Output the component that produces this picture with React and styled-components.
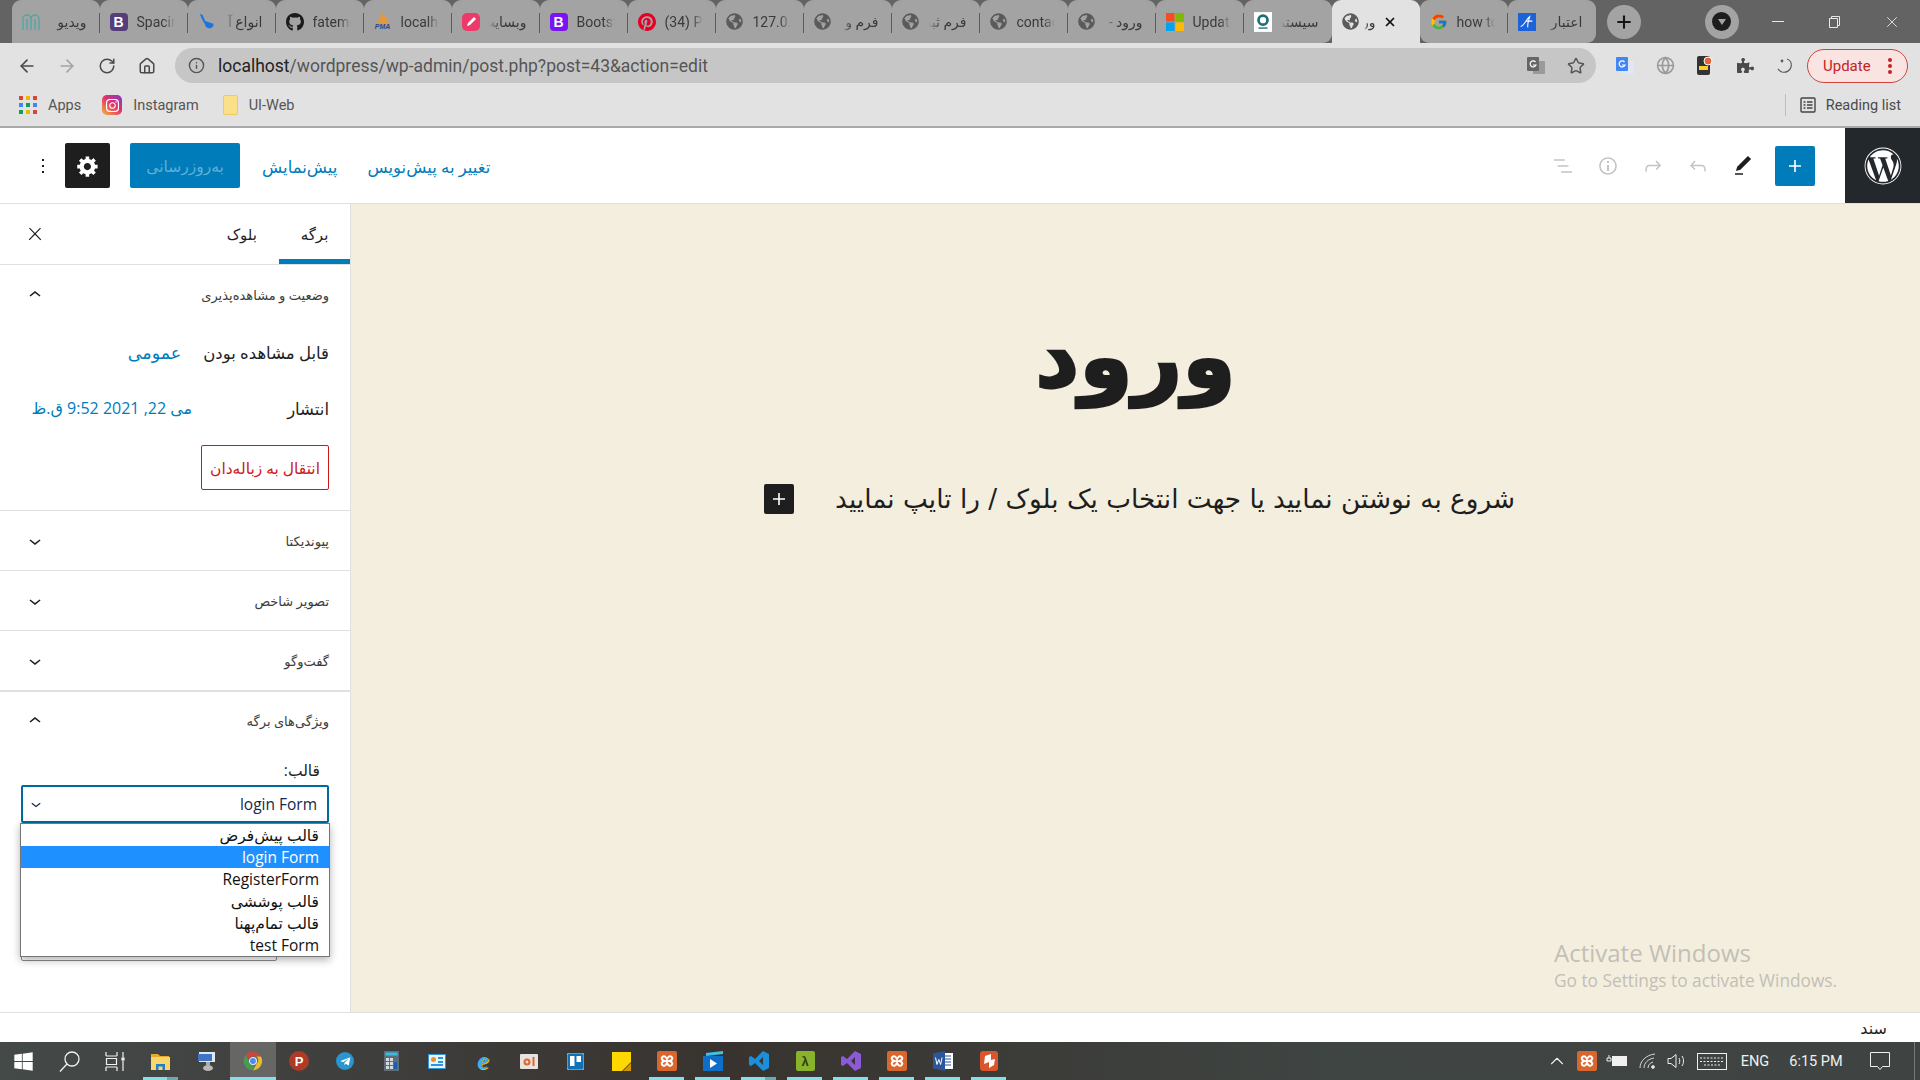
import React from "react";
import styled, { createGlobalStyle, css } from "styled-components";
import {
  FaWordpress,
  FaGithub,
  FaPinterest,
  FaGlobeAmericas,
  FaPuzzlePiece,
  FaWindows,
  FaTelegramPlane,
  FaInstagram,
} from "react-icons/fa";
import { FcGoogle } from "react-icons/fc";
import { ArrowLeft, ArrowRight, RotateCw, Home, Info, Star, Plus, X, Globe, ChevronUp } from "lucide-react";

const CHROME_FONT = `Roboto, "DejaVu Sans", sans-serif`;
const EDITOR_FONT = `"Open Sans", "DejaVu Sans", sans-serif`;

const GlobalStyle = createGlobalStyle`
  html, body {
    margin: 0;
    padding: 0;
    height: 100%;
    overflow: hidden;
    background: #fff;
  }
  * { box-sizing: border-box; }
`;

const Page = styled.div`
  display: flex;
  flex-direction: column;
  height: 1080px;
  width: 1920px;
  font-family: ${CHROME_FONT};
`;

/* ---------- browser tabs ---------- */

const TabStrip = styled.div`
  display: flex;
  align-items: stretch;
  height: 43px;
  padding-left: 11.5px;
  background: #636363;
  flex-shrink: 0;
`;

const Tab = styled.div`
  position: relative;
  display: flex;
  align-items: center;
  flex: 0 0 88px;
  padding-left: 10px;
  background: ${(p) => (p.$active ? "#e2e2e2" : "#a3a3a3")};
  border-radius: 9px 9px 0 0;
  ${(p) =>
    p.$afterActive &&
    css`
      border-bottom-right-radius: 9px;
    `}
  ${(p) =>
    p.$beforeActive &&
    css`
      border-bottom-left-radius: 9px;
    `}
  ${(p) =>
    p.$last &&
    css`
      border-bottom-right-radius: 9px;
    `}
  ${(p) =>
    p.$separator &&
    css`
      &::after {
        content: "";
        position: absolute;
        right: 0;
        top: 13px;
        bottom: 10px;
        width: 1px;
        background: #5c5c5c;
      }
    `}
`;

const FaviconBox = styled.span`
  display: flex;
  align-items: center;
  justify-content: center;
  width: 18px;
  height: 18px;
  flex-shrink: 0;
`;

const TabTitle = styled.span`
  display: block;
  width: ${(p) => (p.$active ? "12px" : "38px")};
  margin-left: ${(p) => (p.$active ? "4px" : "9px")};
  overflow: hidden;
  white-space: nowrap;
  font-size: 14px;
  line-height: 20px;
  color: #3a3a3a;
  direction: ${(p) => (p.$rtl ? "rtl" : "ltr")};
  mask-image: linear-gradient(${(p) => (p.$rtl ? "to left" : "to right")}, #000 70%, transparent);
`;

const TabClose = styled.span`
  display: flex;
  margin-left: 7px;
  color: #111;
`;

const BootstrapMark = styled.span`
  display: flex;
  align-items: center;
  justify-content: center;
  width: 18px;
  height: 18px;
  border-radius: 4px;
  background: ${(p) => p.$color};
  color: #fff;
  font: 700 14px "Liberation Sans", sans-serif;
`;

const PmaMark = styled.span`
  display: flex;
  flex-direction: column;
  align-items: center;
  font: italic 700 7px "Liberation Sans", sans-serif;
  line-height: 8px;
  color: #2a4a8e;
  &::before {
    content: "";
    border: 6px solid transparent;
    border-top: 0;
    border-bottom: 11px solid #e39a3e;
  }
`;

const StripActions = styled.div`
  display: flex;
  align-items: center;
  flex: 1;
`;

const RoundButton = styled.span`
  display: flex;
  align-items: center;
  justify-content: center;
  width: 34px;
  height: 34px;
  margin-left: 11px;
  border-radius: 50%;
  background: #a3a3a3;
  color: #151515;
`;

const ProfileButton = styled(RoundButton)`
  margin-left: 64px;
`;

const ProfileDot = styled.span`
  display: flex;
  align-items: center;
  justify-content: center;
  width: 19px;
  height: 19px;
  border-radius: 50%;
  background: #1d1d1d;
  &::after {
    content: "";
    border: 4px solid transparent;
    border-top: 6px solid #a3a3a3;
    border-bottom: 0;
  }
`;

const WindowControls = styled.div`
  display: flex;
  align-items: center;
  margin-left: auto;
  color: #e8e8e8;
`;

const WindowButton = styled.span`
  display: flex;
  align-items: center;
  justify-content: center;
  width: 57px;
  height: 43px;
`;

/* ---------- browser toolbar ---------- */

const ToolbarRow = styled.div`
  display: flex;
  align-items: center;
  height: 40px;
  padding-top: 5px;
  background: #e2e2e2;
  flex-shrink: 0;
`;

const NavButton = styled.span`
  display: flex;
  align-items: center;
  justify-content: center;
  width: 40px;
  color: ${(p) => (p.$muted ? "#a4a4a4" : "#4a4a4a")};
`;

const NavGroup = styled.div`
  display: flex;
  padding-left: 7px;
  width: 175px;
`;

const Omnibox = styled.div`
  display: flex;
  align-items: center;
  width: 1421px;
  height: 35px;
  border-radius: 18px;
  background: #c6c6c6;
  padding: 0 11px 0 13px;
`;

const UrlHost = styled.span`
  margin-left: 13px;
  font-size: 17.5px;
  color: #222;
`;

const UrlRest = styled.span`
  font-size: 17.5px;
  color: #555;
`;

const OmniIcons = styled.div`
  display: flex;
  align-items: center;
  gap: 21px;
  margin-left: auto;
  color: #555;
`;

const ExtensionSlot = styled.span`
  display: flex;
  align-items: center;
  justify-content: center;
  width: 40px;
  color: #5d5d5d;
`;

const Extensions = styled.div`
  display: flex;
  margin-left: 9px;
`;

const UpdatePill = styled.span`
  display: flex;
  align-items: center;
  width: 101px;
  height: 34px;
  margin-left: 2px;
  padding-left: 15px;
  border: 1.5px solid #d8413a;
  border-radius: 17px;
  background: #f9e4e1;
  color: #c5221f;
  font-size: 15px;
`;

const UpdateDots = styled.span`
  display: flex;
  flex-direction: column;
  gap: 2px;
  margin-left: 17px;
  i {
    width: 4px;
    height: 4px;
    border-radius: 50%;
    background: #c5221f;
  }
`;

const BookmarkRow = styled.div`
  display: flex;
  align-items: center;
  height: 45px;
  padding: 1px 19px 0;
  background: #e2e2e2;
  border-bottom: 2px solid #a9a9a9;
  flex-shrink: 0;
`;

const Bookmark = styled.span`
  display: flex;
  align-items: center;
  gap: 11px;
  margin-right: 21px;
  font-size: 14.5px;
  color: #555;
`;

const AppsGrid = styled.span`
  display: grid;
  grid-template-columns: repeat(3, 4px);
  gap: 3px;
`;

const AppDot = styled.i`
  width: 4px;
  height: 4px;
  background: ${(p) => p.$c};
`;

const InstaBadge = styled.span`
  display: flex;
  align-items: center;
  justify-content: center;
  width: 20px;
  height: 20px;
  border-radius: 5px;
  background: linear-gradient(40deg, #f7b23b, #e1306c 55%, #7a3ccf);
  color: #fff;
`;

const FolderMark = styled.span`
  width: 15px;
  height: 20px;
  margin-left: 3px;
  border-radius: 2px;
  background: #fbe08a;
  border: 1px solid #eccb63;
`;

const ReadingList = styled.span`
  display: flex;
  align-items: center;
  margin-left: auto;
  padding-left: 14px;
  gap: 10px;
  border-left: 1px solid #bdbdbd;
  height: 22px;
  font-size: 14.5px;
  color: #4a4a4a;
`;

/* ---------- wordpress editor ---------- */

const Editor = styled.div`
  display: flex;
  flex-direction: column;
  flex: 1;
  min-height: 0;
  direction: rtl;
  background: #fff;
  font-family: ${EDITOR_FONT};
`;

const EditorHeader = styled.header`
  display: flex;
  align-items: center;
  height: 76px;
  border-bottom: 1px solid #e0e0e0;
  flex-shrink: 0;
`;

const WpLogo = styled.div`
  display: flex;
  align-items: center;
  justify-content: center;
  width: 75px;
  height: 75px;
  background: #23282d;
  color: #fff;
`;

const InserterButton = styled.span`
  display: flex;
  align-items: center;
  justify-content: center;
  width: 40px;
  height: 40px;
  margin-right: 30px;
  margin-left: 10px;
  border-radius: 2px;
  background: #007cba;
  color: #fff;
`;

const ToolIcon = styled.span`
  display: flex;
  align-items: center;
  justify-content: center;
  width: 45px;
  color: ${(p) => (p.$active ? "#1e1e1e" : "#c4c4c4")};
`;

const HeaderActions = styled.div`
  display: flex;
  align-items: center;
  margin-right: auto;
  height: 100%;
`;

const LinkButton = styled.span`
  margin-left: ${(p) => p.$gap}px;
  padding-top: 1px;
  font-size: 16.5px;
  color: #007cba;
  white-space: nowrap;
`;

const PublishButton = styled.span`
  display: flex;
  align-items: center;
  justify-content: center;
  width: 110px;
  height: 45px;
  margin-left: 20px;
  border-radius: 2px;
  background: #007cba;
  color: #5fb0d8;
  font-size: 15.5px;
`;

const SettingsButton = styled.span`
  display: flex;
  align-items: center;
  justify-content: center;
  width: 45px;
  height: 45px;
  border-radius: 2px;
  background: #1e1e1e;
  color: #fff;
`;

const MoreButton = styled.span`
  display: flex;
  justify-content: center;
  width: 65px;
  padding-left: 21px;
  color: #1e1e1e;
`;

const Workspace = styled.div`
  display: flex;
  flex: 1;
  min-height: 0;
`;

const Canvas = styled.main`
  position: relative;
  flex: 1;
  background: #f4eede;
  color: #1e1e1e;
`;

const PageTitle = styled.h1`
  margin: 0;
  padding-top: 78px;
  font-family: "DejaVu Sans", sans-serif;
  font-size: 86px;
  line-height: 150px;
  font-weight: 700;
  text-align: center;
  -webkit-text-stroke: 2.5px #1e1e1e;
`;

const EmptyBlock = styled.div`
  display: flex;
  align-items: center;
  justify-content: space-between;
  width: 751px;
  margin: 52px 405px 0 0;
  font-family: "DejaVu Sans", sans-serif;
  font-size: 26.3px;
`;

const BlockInserter = styled.span`
  display: flex;
  align-items: center;
  justify-content: center;
  width: 30px;
  height: 30px;
  border-radius: 2px;
  background: #1e1e1e;
  color: #fff;
`;

const Watermark = styled.div`
  position: absolute;
  left: 1203px;
  bottom: 19px;
  direction: ltr;
  font-family: "Open Sans", sans-serif;
  color: #c2bfb6;
`;

const WatermarkTitle = styled.div`
  font-size: 24px;
  line-height: 33px;
`;

const WatermarkNote = styled.div`
  font-size: 17.3px;
  line-height: 24px;
`;

const Sidebar = styled.aside`
  width: 351px;
  border-right: 1px solid #e0e0e0;
  background: #fff;
  color: #1e1e1e;
  flex-shrink: 0;
`;

const SidebarTabs = styled.div`
  display: flex;
  align-items: stretch;
  height: 61px;
  border-bottom: 1px solid #e0e0e0;
`;

const SidebarTab = styled.span`
  display: flex;
  align-items: center;
  justify-content: center;
  font-size: 15px;
  ${(p) =>
    p.$active
      ? css`
          width: 71px;
          box-shadow: inset 0 -5px 0 #007cba;
        `
      : css`
          margin-right: 22px;
        `}
`;

const SidebarClose = styled.span`
  display: flex;
  align-items: center;
  justify-content: center;
  width: 70px;
  margin-right: auto;
`;

const Panel = styled.section`
  border-bottom: ${(p) => (p.$thick ? "2px" : "1px")} solid #e0e0e0;
  padding-bottom: ${(p) => p.$pad || 0}px;
`;

const PanelHeader = styled.div`
  display: flex;
  align-items: center;
  justify-content: space-between;
  height: ${(p) => p.$h || 59}px;
  padding-right: 21px;
  font-size: 13px;
  color: #3c3c3c;
`;

const PanelChevron = styled.span`
  display: flex;
  justify-content: center;
  width: 70px;
  color: #1e1e1e;
`;

const PostRow = styled.div`
  display: flex;
  align-items: center;
  height: 56px;
  padding: 0 21px;
  font-size: 16.5px;
`;

const PostValue = styled.a`
  margin-right: ${(p) => p.$gap}px;
  color: #007cba;
  font-size: ${(p) => p.$size}px;
`;

const TrashButton = styled.span`
  display: flex;
  align-items: center;
  justify-content: center;
  width: 128px;
  height: 45px;
  margin: 9px 21px 0 0;
  border: 1px solid #cc1818;
  border-radius: 2px;
  color: #cc1818;
  font-size: 15.5px;
`;

const TemplateField = styled.div`
  position: relative;
  padding: 11px 21px 0;
  height: 319px;
`;

const FieldLabel = styled.div`
  padding-right: 9px;
  font-size: 15.5px;
  line-height: 20px;
  margin-bottom: 5px;
`;

const SelectBox = styled.div`
  display: flex;
  align-items: center;
  justify-content: space-between;
  height: 38px;
  padding: 0 10px 0 3px;
  border: 2px solid #006ba1;
  border-radius: 2px;
  font-size: 15.5px;
  color: #16264c;
`;

const SelectMenu = styled.ul`
  position: absolute;
  top: 74px;
  left: 20px;
  right: 20px;
  margin: 0;
  padding: 0;
  list-style: none;
  background: #fff;
  border: 1px solid #767676;
  box-shadow: 0 3px 8px rgba(0, 0, 0, 0.3);
  font-size: 15.5px;
  color: #111;
  z-index: 2;
`;

const SelectOption = styled.li`
  height: 22px;
  line-height: 22px;
  padding: 0 10px;
  background: ${(p) => (p.$selected ? "#1e90ff" : "transparent")};
  color: ${(p) => (p.$selected ? "#fff" : "inherit")};
`;

const HiddenButton = styled.div`
  width: 256px;
  height: 40px;
  margin: 98px auto 0 0;
  border: 1px solid #8d8d8d;
  border-radius: 2px;
`;

const StatusBar = styled.footer`
  display: flex;
  align-items: center;
  height: 30px;
  padding-right: 33px;
  border-top: 1px solid #e0e0e0;
  font-size: 16px;
  color: #1e1e1e;
  flex-shrink: 0;
`;

/* ---------- windows taskbar ---------- */

const Taskbar = styled.div`
  display: flex;
  align-items: stretch;
  height: 38px;
  background: linear-gradient(90deg, #444a48, #3f3f3d 18%, #38332f 38%, #3b3a36 50%, #3f4543 70%, #3f4442);
  color: #fff;
  flex-shrink: 0;
`;

const TaskItem = styled.span`
  position: relative;
  display: flex;
  align-items: center;
  justify-content: center;
  width: 46px;
  background: ${(p) => (p.$active ? "#666664" : "transparent")};
  ${(p) =>
    p.$running &&
    css`
      &::after {
        content: "";
        position: absolute;
        bottom: 0;
        height: 3px;
        left: ${p.$active ? "0" : "5px"};
        right: ${p.$active ? "0" : "6px"};
        background: ${p.$split
          ? "linear-gradient(90deg, #86dfe6 70%, #6aa9ad 70%)"
          : "#86dfe6"};
      }
    `}
`;

const AppTile = styled.span`
  display: flex;
  align-items: center;
  justify-content: center;
  width: ${(p) => p.$w || 20}px;
  height: ${(p) => p.$h || 20}px;
  border-radius: ${(p) => p.$r || 2}px;
  background: ${(p) => p.$bg};
  color: ${(p) => p.$fg || "#fff"};
  font: 700 13px "Liberation Sans", sans-serif;
`;

const IeLetter = styled.span`
  font: italic 700 26px "Liberation Serif", serif;
  line-height: 22px;
  color: #35b4ee;
  text-shadow: 1px 1px 0 #e8b923;
`;

const Tray = styled.div`
  display: flex;
  align-items: center;
  margin-left: auto;
  font-size: 14.5px;
  color: #f0f0f0;
`;

const TrayItem = styled.span`
  display: flex;
  align-items: center;
  justify-content: center;
  width: ${(p) => p.$w}px;
`;

const ShowDesktop = styled.span`
  width: 13px;
  height: 100%;
  margin-right: 5px;
  border-right: 1px solid #777;
`;

const Svg24 = ({ size = 24, d, fill = "currentColor" }) => (
  <svg width={size} height={size} viewBox="0 0 24 24" fill={fill}>
    <path d={d} />
  </svg>
);

const paths = {
  plus: "M18 11.2h-5.2V6h-1.6v5.2H6v1.6h5.2V18h1.6v-5.2H18z",
  list: "M13.8 5.2H3v1.5h10.8V5.2zm-3.6 12v1.5H21v-1.5H10.2zm7.2-6H6.6v1.5h10.8v-1.5z",
  info: "M12 3.2c-4.8 0-8.8 3.9-8.8 8.8 0 4.8 3.9 8.8 8.8 8.8 4.8 0 8.8-3.9 8.8-8.8 0-4.8-4-8.8-8.8-8.8zm0 16c-4 0-7.2-3.3-7.2-7.2C4.8 8 8 4.8 12 4.8s7.2 3.3 7.2 7.2c0 4-3.2 7.2-7.2 7.2zM11 17h2v-6h-2v6zm0-8h2V7h-2v2z",
  redo: "M15.6 6.5l-1.1 1 2.9 3.3H8c-.9 0-1.7.3-2.3.9-1.4 1.5-1.4 4.2-1.4 5.6v.2h1.5v-.3c0-1.1 0-3.5 1-4.5.3-.3.7-.5 1.3-.5h9.2L14.5 15l1.1 1.1 4.6-4.6-4.6-5z",
  undo: "M18.3 11.7c-.6-.6-1.4-.9-2.3-.9H6.7l2.9-3.3-1.1-1-4.5 5L8.5 16l1-1-2.7-2.7H16c.5 0 .9.2 1.3.5 1 1 1 3.4 1 4.5v.3h1.5v-.2c0-1.5 0-4.3-1.5-5.7z",
  pencil: "M20.1 5.1L16.9 2 6.2 12.7l-1.3 4.4 4.5-1.3L20.1 5.1zM4 20.8h8v-1.5H4v1.5z",
  more: "M13 19h-2v-2h2v2zm0-6h-2v-2h2v2zm0-6h-2V5h2v2z",
  close: "M13 11.8l6.1-6.3-1-1-6.1 6.2-6.1-6.2-1 1 6.1 6.3-6.5 6.7 1 1 6.5-6.6 6.5 6.6 1-1z",
  up: "M6.5 12.4L12 8l5.5 4.4-.9 1.2L12 10l-4.5 3.6-1-1.2z",
  down: "M17.5 11.6L12 16l-5.5-4.4.9-1.2L12 14l4.6-3.6 1 1.2z",
};

const CogIcon = () => (
  <svg width="24" height="24" viewBox="0 0 20 20" fill="currentColor">
    <path d="M18 12h-2.18c-.17.7-.44 1.35-.81 1.93l1.54 1.54-2.1 2.1-1.54-1.54c-.58.36-1.23.63-1.91.79V19H8v-2.18c-.68-.16-1.33-.43-1.91-.79l-1.54 1.54-2.12-2.12 1.54-1.54c-.36-.58-.63-1.23-.79-1.91H1V9.03h2.17c.16-.7.44-1.35.8-1.94L2.43 5.55l2.1-2.1 1.54 1.54c.58-.37 1.24-.64 1.93-.81V2h3v2.18c.68.16 1.33.43 1.91.79l1.54-1.54 2.12 2.12-1.54 1.54c.36.59.64 1.24.8 1.94H18V12zm-8.5 1.5c1.66 0 3-1.34 3-3s-1.34-3-3-3-3 1.34-3 3 1.34 3 3 3z" />
  </svg>
);

const MsLogo = () => (
  <svg width="20" height="20" viewBox="0 0 20 20">
    <rect width="9.5" height="9.5" fill="#f25022" />
    <rect x="10.5" width="9.5" height="9.5" fill="#7fba00" />
    <rect y="10.5" width="9.5" height="9.5" fill="#00a4ef" />
    <rect x="10.5" y="10.5" width="9.5" height="9.5" fill="#ffb900" />
  </svg>
);

const ChromeLogo = () => (
  <svg width="20" height="20" viewBox="0 0 24 24">
    <path d="M12 1a11 11 0 0 1 9.5 5.500H12a5.500 5.500 0 0 0-5.200 3.700L3.400 5A11 11 0 0 1 12 1z" fill="#c9483b" />
    <path d="M21.500 6.500A11 11 0 0 1 12 23l4.700-8.200a5.500 5.500 0 0 0-.6-8.300z" fill="#e8bd2a" />
    <path d="M12 23A11 11 0 0 1 3.400 5l4.700 8.800a5.500 5.500 0 0 0 5.600 3.700z" fill="#4a9a57" />
    <circle cx="12" cy="12" r="4.200" fill="#4b8bf0" stroke="#e8e8e8" strokeWidth="1.300" />
  </svg>
);

const XamppIcon = () => (
  <AppTile $bg="#d9662c">
    <svg width="16" height="16" viewBox="0 0 24 24" fill="none" stroke="#fff" strokeWidth="3">
      <path d="M5 6c3-3 5.500 0 7 3 1.500-3 4-6 7-3 2.500 2.500 0 5-3.500 6 3.500 1 6 3.500 3.500 6-3 3-5.500 0-7-3-1.500 3-4 6-7 3-2.500-2.500 0-5 3.500-6C5 11 2.500 8.500 5 6z" />
    </svg>
  </AppTile>
);

const Favicon = ({ kind }) => {
  switch (kind) {
    case "teal":
      return (
        <svg width="18" height="20" viewBox="0 0 18 20" fill="none" stroke="#4aa7a8" strokeWidth="1.300">
          <path d="M1 18V7a4 4 0 0 1 8 0 4 4 0 0 1 8 0v11M5 18V7M13 18V7M9 7v11" />
        </svg>
      );
    case "boot1":
      return <BootstrapMark $color="#563d7c">B</BootstrapMark>;
    case "boot2":
      return <BootstrapMark $color="#7a14f2">B</BootstrapMark>;
    case "horn":
      return (
        <svg width="20" height="20" viewBox="0 0 20 20" fill="#1c74e0">
          <path d="M2 1l3 1 3 7 9 3c1 2-1 5-4 5-3 0-5-2-5-4L5 8z" />
        </svg>
      );
    case "github":
      return <FaGithub size={20} color="#1b1b1b" />;
    case "pma":
      return <PmaMark>PMA</PmaMark>;
    case "pink":
      return (
        <svg width="18" height="18" viewBox="0 0 18 18">
          <rect width="18" height="18" rx="5" fill="#ee3a6b" />
          <path d="M5 13l1-3 6-6 2 2-6 6z" fill="#fff" />
        </svg>
      );
    case "pin":
      return <FaPinterest size={20} color="#e60023" />;
    case "ms":
      return <MsLogo />;
    case "seal":
      return (
        <svg width="20" height="22" viewBox="0 0 20 22">
          <rect width="20" height="22" fill="#fff" />
          <circle cx="10" cy="9" r="5" fill="none" stroke="#1e6e78" strokeWidth="3" />
          <rect x="5" y="17" width="10" height="1.500" fill="#1e6e78" />
        </svg>
      );
    case "google":
      return <FcGoogle size={20} />;
    case "sig":
      return (
        <svg width="20" height="20" viewBox="0 0 20 20">
          <rect width="20" height="20" fill="#1c62d8" />
          <path d="M3 15c4-1 6-8 10-11-1 4-3 8-2 12M9 9h7" stroke="#fff" strokeWidth="1.200" fill="none" />
        </svg>
      );
    default:
      return <FaGlobeAmericas size={17} color="#5a5a5a" />;
  }
};

const tabs = [
  { icon: "teal", title: "ویدیو", rtl: true },
  { icon: "boot1", title: "Spacing" },
  { icon: "horn", title: "انواع آ", rtl: true },
  { icon: "github", title: "fatemeh" },
  { icon: "pma", title: "localhost" },
  { icon: "pink", title: "وبسایت", rtl: true },
  { icon: "boot2", title: "Bootstrap" },
  { icon: "pin", title: "(34) Pin" },
  { icon: "globe", title: "127.0.0.1" },
  { icon: "globe", title: "فرم و", rtl: true },
  { icon: "globe", title: "فرم ثبت", rtl: true },
  { icon: "globe", title: "contact" },
  { icon: "globe", title: "ورود -", rtl: true },
  { icon: "ms", title: "Update" },
  { icon: "seal", title: "سیستم", rtl: true },
  { icon: "globe", title: "ورود", rtl: true, active: true },
  { icon: "google", title: "how to" },
  { icon: "sig", title: "اعتبار", rtl: true },
];

const appColors = ["#db4437", "#f4b400", "#db4437", "#4285f4", "#0f9d58", "#4285f4", "#0f9d58", "#f4b400", "#db4437"];

const taskApps = [
  { node: <FaWindows size={21} /> },
  {
    node: (
      <svg width="21" height="21" viewBox="0 0 21 21" fill="none" stroke="#f2f2f2" strokeWidth="1.300">
        <circle cx="13" cy="8" r="7" />
        <path d="M8 13l-7 7.500" />
      </svg>
    ),
  },
  {
    node: (
      <svg width="20" height="20" viewBox="0 0 20 20" fill="none" stroke="#f2f2f2" strokeWidth="1.200">
        <path d="M1 5h11M1 1v4M12 1v4M1.500 7.500h10v6h-10zM1 16h11M1 16v4M12 16v4M18 1v5M18 10v10" />
        <rect x="17" y="7" width="2" height="2" fill="#f2f2f2" />
      </svg>
    ),
  },
  {
    node: (
      <svg width="20" height="18" viewBox="0 0 20 18">
        <path d="M0 2h7l2 2h9v3H0z" fill="#e9a92c" />
        <rect y="5" width="19" height="13" fill="#f9d56c" />
        <path d="M5 18v-6h9v6h-2.500v-3.500h-4V18z" fill="#1f80c9" />
      </svg>
    ),
    running: true,
    split: true,
  },
  {
    node: (
      <svg width="20" height="22" viewBox="0 0 20 22">
        <rect x="2" y="2" width="16" height="10" fill="#dfe7f2" />
        <rect x="1" y="4" width="14" height="7" fill="#3f73c4" />
        <path d="M9 12h4v3H9z" fill="#aaa" />
        <ellipse cx="11" cy="18" rx="5" ry="3" fill="#b9b9b9" />
      </svg>
    ),
  },
  { node: <ChromeLogo />, running: true, active: true },
  { node: <AppTile $r={10} $bg="#ad3b25">P</AppTile> },
  {
    node: (
      <AppTile $w={18} $h={18} $r={9} $bg="#2a95cf">
        <FaTelegramPlane size={11} />
      </AppTile>
    ),
  },
  {
    node: (
      <svg width="15" height="20" viewBox="0 0 15 20">
        <rect width="15" height="20" fill="#5f6c78" />
        <rect x="1.500" y="1.500" width="12" height="3" fill="#38bde0" />
        <path d="M2 7h3v3H2zM6 7h3v3H6zM2 11h3v3H2zM6 11h3v3H6zM2 15h3v3H2zM6 15h3v3H6z" fill="#d5dadf" />
        <rect x="10" y="11" width="3" height="7" fill="#1c5fa8" />
      </svg>
    ),
  },
  {
    node: (
      <svg width="18" height="15" viewBox="0 0 18 15">
        <rect width="18" height="15" fill="#2f95d8" />
        <rect x="1" y="1" width="16" height="13" fill="#e8f3fb" />
        <circle cx="5.500" cy="5.500" r="2.500" fill="#e8922c" />
        <path d="M10 3h5v2h-5zM10 7h5v2h-5zM3 10h12v2H3z" fill="#2f95d8" />
      </svg>
    ),
  },
  { node: <IeLetter>e</IeLetter> },
  {
    node: (
      <svg width="18" height="15" viewBox="0 0 18 15">
        <rect width="18" height="15" rx="1" fill="#e8e3df" />
        <circle cx="7" cy="8" r="3.500" fill="#e0662f" />
        <circle cx="7" cy="8" r="1.400" fill="#e8e3df" />
        <rect x="12.500" y="3" width="2" height="9" fill="#e0662f" />
      </svg>
    ),
  },
  {
    node: (
      <svg width="17" height="17" viewBox="0 0 17 17">
        <rect width="17" height="17" rx="2.500" fill="#0d72b8" stroke="#b9c3cc" />
        <rect x="3" y="3" width="4.500" height="10" fill="#fff" />
        <rect x="9.500" y="3" width="4.500" height="6" fill="#fff" />
      </svg>
    ),
  },
  {
    node: (
      <svg width="19" height="19" viewBox="0 0 19 19">
        <rect width="19" height="19" fill="#ffd800" />
        <path d="M19 10v9H10z" fill="#3a3530" />
        <path d="M19 11v8h-8z" fill="#e3a300" opacity=".9" />
      </svg>
    ),
  },
  { node: <XamppIcon />, running: true },
  {
    node: (
      <svg width="20" height="20" viewBox="0 0 20 20">
        <path d="M0 5h20v15H0z" fill="#0f6fc6" />
        <path d="M3 2l17-2v3L3 5z" fill="#3fc1ea" />
        <path d="M7 8l7 4.500L7 17z" fill="#fff" />
      </svg>
    ),
    running: true,
  },
  {
    node: (
      <svg width="20" height="20" viewBox="0 0 20 20">
        <path d="M14 0l6 3v14l-6 3-8-8-4 3-2-1V6l2-1 4 3zm0 6l-4 4 4 4z" fill="#1a8fdd" />
      </svg>
    ),
    running: true,
    split: true,
  },
  { node: <AppTile $w={19} $bg="#89b32c" $fg="#2c3d0e">λ</AppTile>, running: true },
  {
    node: (
      <svg width="20" height="20" viewBox="0 0 20 20">
        <path d="M14 0l6 3v14l-6 3-8-8-4 3-2-1V6l2-1 4 3zm0 6l-4 4 4 4z" fill="#8c5ad6" />
      </svg>
    ),
    running: true,
  },
  { node: <XamppIcon />, running: true },
  {
    node: (
      <svg width="20" height="20" viewBox="0 0 20 20">
        <rect x="9" y="2" width="11" height="16" fill="#fff" />
        <path d="M11 5h7M11 8h7M11 11h7M11 14h7" stroke="#2b579a" />
        <path d="M0 2.500L12 0v20L0 17.500z" fill="#2b579a" />
        <path d="M2.500 6.500l1.500 7 1.800-5 1.800 5 1.500-7" stroke="#fff" fill="none" />
      </svg>
    ),
    running: true,
  },
  {
    node: (
      <AppTile $w={18} $r={3} $bg="#d9552b">
        <svg width="12" height="16" viewBox="0 0 12 16">
          <path d="M2 3l6-2v6l4-1-1 6-5 3V9L1 11z" fill="#fff" />
        </svg>
      </AppTile>
    ),
    running: true,
  },
];

const TranslateIcon = ({ tint }) => (
  <svg width="20" height="20" viewBox="0 0 20 20">
    <rect x="7" y="5" width="12" height="13" rx="1" fill={tint ? "#dfe7f7" : "#9a9a9a"} />
    <rect x="1" y="1" width="12" height="14" rx="1" fill={tint ? "#4285f4" : "#666"} />
    <path d="M9.500 6a3 3 0 1 0 .5 3H7" stroke="#fff" strokeWidth="1.200" fill="none" />
  </svg>
);

const App = () => (
  <Page>
    <GlobalStyle />

    <TabStrip>
      {tabs.map((tab, i) => {
        const next = tabs[i + 1];
        const prev = tabs[i - 1];
        return (
          <Tab
            key={i}
            $active={tab.active}
            $beforeActive={prev && prev.active}
            $afterActive={next && next.active}
            $last={i === tabs.length - 1}
            $separator={!tab.active && !(next && next.active) && i !== tabs.length - 1}
          >
            <FaviconBox>
              <Favicon kind={tab.icon} />
            </FaviconBox>
            <TabTitle $rtl={tab.rtl} $active={tab.active}>
              {tab.title}
            </TabTitle>
            {tab.active && (
              <TabClose>
                <X size={14} strokeWidth={3} />
              </TabClose>
            )}
          </Tab>
        );
      })}
      <StripActions>
        <RoundButton>
          <Plus size={20} strokeWidth={2.500} />
        </RoundButton>
        <ProfileButton>
          <ProfileDot />
        </ProfileButton>
        <WindowControls>
          <WindowButton>
            <svg width="12" height="2"><rect width="12" height="1" fill="currentColor" /></svg>
          </WindowButton>
          <WindowButton>
            <svg width="13" height="14" fill="none" stroke="currentColor"><path d="M3.500 3V1.500h8v9H10M1.500 3.500h8v9h-8z" /></svg>
          </WindowButton>
          <WindowButton>
            <X size={18} strokeWidth={1.200} />
          </WindowButton>
        </WindowControls>
      </StripActions>
    </TabStrip>

    <ToolbarRow>
      <NavGroup>
        <NavButton><ArrowLeft size={20} /></NavButton>
        <NavButton $muted><ArrowRight size={20} /></NavButton>
        <NavButton><RotateCw size={18} /></NavButton>
        <NavButton><Home size={18} /></NavButton>
      </NavGroup>
      <Omnibox>
        <Info size={17} color="#555" />
        <UrlHost>localhost</UrlHost>
        <UrlRest>/wordpress/wp-admin/post.php?post=43&amp;action=edit</UrlRest>
        <OmniIcons>
          <TranslateIcon />
          <Star size={18} />
        </OmniIcons>
      </Omnibox>
      <Extensions>
        <ExtensionSlot><TranslateIcon tint /></ExtensionSlot>
        <ExtensionSlot><Globe size={19} color="#9a9a9a" /></ExtensionSlot>
        <ExtensionSlot>
          <svg width="16" height="20" viewBox="0 0 16 20">
            <rect width="13" height="19" rx="2" fill="#333" />
            <rect x="2" y="10" width="9" height="4" fill="#f7d02c" />
            <circle cx="11" cy="5" r="4" fill="#e2683a" stroke="#fff" />
          </svg>
        </ExtensionSlot>
        <ExtensionSlot><FaPuzzlePiece size={17} color="#4a4a4a" /></ExtensionSlot>
        <ExtensionSlot>
          <svg width="18" height="18" viewBox="0 0 18 18" fill="none" stroke="#5a5a5a" strokeWidth="1.200">
            <path d="M11 2c3 1 5 4 4 8-1 4-5 6-9 5-2-.6-3-2-4-3" />
            <circle cx="6" cy="4" r=".8" fill="#5a5a5a" />
          </svg>
        </ExtensionSlot>
      </Extensions>
      <UpdatePill>
        Update
        <UpdateDots><i /><i /><i /></UpdateDots>
      </UpdatePill>
    </ToolbarRow>

    <BookmarkRow>
      <Bookmark>
        <AppsGrid>
          {appColors.map((c, i) => (
            <AppDot key={i} $c={c} />
          ))}
        </AppsGrid>
        Apps
      </Bookmark>
      <Bookmark>
        <InstaBadge><FaInstagram size={15} /></InstaBadge>
        Instagram
      </Bookmark>
      <Bookmark>
        <FolderMark />
        UI-Web
      </Bookmark>
      <ReadingList>
        <svg width="16" height="16" viewBox="0 0 16 16" fill="none" stroke="#444" strokeWidth="1.400">
          <rect x="1" y="1" width="14" height="14" rx="1" />
          <path d="M3.500 5h2M7 5h5.500M3.500 8h2M7 8h5.500M3.500 11h2M7 11h5.500" />
        </svg>
        Reading list
      </ReadingList>
    </BookmarkRow>

    <Editor>
      <EditorHeader>
        <WpLogo><FaWordpress size={38} /></WpLogo>
        <InserterButton><Svg24 d={paths.plus} /></InserterButton>
        <ToolIcon $active><Svg24 d={paths.pencil} /></ToolIcon>
        <ToolIcon><Svg24 d={paths.undo} /></ToolIcon>
        <ToolIcon><Svg24 d={paths.redo} /></ToolIcon>
        <ToolIcon><Svg24 d={paths.info} /></ToolIcon>
        <ToolIcon><Svg24 d={paths.list} /></ToolIcon>
        <HeaderActions>
          <LinkButton $gap={30}>تغییر به پیش‌نویس</LinkButton>
          <LinkButton $gap={22}>پیش‌نمایش</LinkButton>
          <PublishButton>به‌روزرسانی</PublishButton>
          <SettingsButton><CogIcon /></SettingsButton>
          <MoreButton><Svg24 d={paths.more} /></MoreButton>
        </HeaderActions>
      </EditorHeader>

      <Workspace>
        <Canvas>
          <PageTitle>ورود</PageTitle>
          <EmptyBlock>
            <span>شروع به نوشتن نمایید یا جهت انتخاب یک بلوک / را تایپ نمایید</span>
            <BlockInserter><Svg24 d={paths.plus} /></BlockInserter>
          </EmptyBlock>
          <Watermark>
            <WatermarkTitle>Activate Windows</WatermarkTitle>
            <WatermarkNote>Go to Settings to activate Windows.</WatermarkNote>
          </Watermark>
        </Canvas>

        <Sidebar>
          <SidebarTabs>
            <SidebarTab $active>برگه</SidebarTab>
            <SidebarTab>بلوک</SidebarTab>
            <SidebarClose><Svg24 size={20} d={paths.close} /></SidebarClose>
          </SidebarTabs>

          <Panel $pad={20}>
            <PanelHeader>
              وضعیت و مشاهده‌پذیری
              <PanelChevron><Svg24 d={paths.up} /></PanelChevron>
            </PanelHeader>
            <PostRow>
              قابل مشاهده بودن
              <PostValue $gap={22} $size={17.5}>عمومی</PostValue>
            </PostRow>
            <PostRow>
              انتشار
              <PostValue $gap={95} $size={16}>می 22, 2021 9:52 ق.ظ</PostValue>
            </PostRow>
            <TrashButton>انتقال به زباله‌دان</TrashButton>
          </Panel>

          <Panel>
            <PanelHeader>
              پیوندیکتا
              <PanelChevron><Svg24 d={paths.down} /></PanelChevron>
            </PanelHeader>
          </Panel>
          <Panel>
            <PanelHeader>
              تصویر شاخص
              <PanelChevron><Svg24 d={paths.down} /></PanelChevron>
            </PanelHeader>
          </Panel>
          <Panel $thick>
            <PanelHeader>
              گفت‌وگو
              <PanelChevron><Svg24 d={paths.down} /></PanelChevron>
            </PanelHeader>
          </Panel>

          <PanelHeader $h={57}>
            ویژگی‌های برگه
            <PanelChevron><Svg24 d={paths.up} /></PanelChevron>
          </PanelHeader>
          <TemplateField>
            <FieldLabel>قالب:</FieldLabel>
            <SelectBox>
              login Form
              <Svg24 size={20} d={paths.down} />
            </SelectBox>
            <SelectMenu>
              <SelectOption>قالب پیش‌فرض</SelectOption>
              <SelectOption $selected>login Form</SelectOption>
              <SelectOption>RegisterForm</SelectOption>
              <SelectOption>قالب پوششی</SelectOption>
              <SelectOption>قالب تمام‌پهنا</SelectOption>
              <SelectOption>test Form</SelectOption>
            </SelectMenu>
            <HiddenButton />
          </TemplateField>
        </Sidebar>
      </Workspace>

      <StatusBar>سند</StatusBar>
    </Editor>

    <Taskbar>
      {taskApps.map((app, i) => (
        <TaskItem key={i} $active={app.active} $running={app.running} $split={app.split}>
          {app.node}
        </TaskItem>
      ))}
      <Tray>
        <TrayItem $w={26}><ChevronUp size={22} strokeWidth={1.200} /></TrayItem>
        <TrayItem $w={34}><XamppIcon /></TrayItem>
        <TrayItem $w={26}>
          <svg width="22" height="14" viewBox="0 0 22 14" fill="none" stroke="#f0f0f0">
            <rect x="6.500" y="2.500" width="14" height="9" fill="#f0f0f0" />
            <path d="M1 4h4v3H1zM3 1v3" />
          </svg>
        </TrayItem>
        <TrayItem $w={36}>
          <svg width="18" height="16" viewBox="0 0 18 16" fill="none" stroke="#d8d8d8">
            <path d="M1 15C1 8 7 2 16 1M5 15c0-5 4-9 10-10M9 15c0-3 2-5 5-6" />
            <circle cx="14" cy="14" r="1.400" fill="#f0f0f0" />
          </svg>
        </TrayItem>
        <TrayItem $w={22}>
          <svg width="20" height="16" viewBox="0 0 20 16" fill="none" stroke="#f0f0f0">
            <path d="M1 5.500h3L9 1.500v13l-5-4H1zM12 5c1 2 1 4 0 6M15 3c2 3 2 7 0 10" />
          </svg>
        </TrayItem>
        <TrayItem $w={48}>
          <svg width="30" height="17" viewBox="0 0 30 17" fill="none" stroke="#f0f0f0">
            <rect x=".5" y=".5" width="29" height="16" />
            <path d="M3 5h24M3 8.500h24M7 12h16" strokeDasharray="2 1.500" />
          </svg>
        </TrayItem>
        <TrayItem $w={38}>ENG</TrayItem>
        <TrayItem $w={84}>6:15 PM</TrayItem>
        <TrayItem $w={44}>
          <svg width="20" height="20" viewBox="0 0 20 20" fill="none" stroke="#f0f0f0">
            <path d="M.5 1.500h19v14h-7l-2.500 3-2.500-3h-7z" />
          </svg>
        </TrayItem>
        <ShowDesktop />
      </Tray>
    </Taskbar>
  </Page>
);

export default App;
